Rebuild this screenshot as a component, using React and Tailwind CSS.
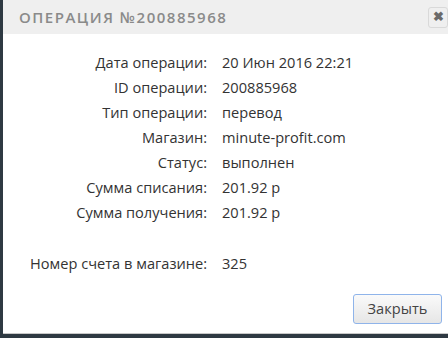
export default function App() {
  const rows = [
    ["Дата операции:", "20 Июн 2016 22:21"],
    ["ID операции:", "200885968"],
    ["Тип операции:", "перевод"],
    ["Магазин:", "minute-profit.com"],
    ["Статус:", "выполнен"],
    ["Сумма списания:", "201.92 р"],
    ["Сумма получения:", "201.92 р"],
  ];
  return (
    <div className="w-[448px] h-[338px] bg-[#2e3942] flex overflow-hidden" style={{ fontFamily: '"Open Sans", "Liberation Sans", sans-serif' }}>
      <div className="ml-[3px] mb-[4px] flex-1 bg-white flex flex-col border-b border-[#c8c8c8]">
        <div className="h-[34px] bg-[#efefef] flex items-center justify-between pl-[16px] shrink-0">
          <div className="text-[15px] font-semibold tracking-[1.5px] text-[#8a8a8a]">ОПЕРАЦИЯ №200885968</div>
          <div className="w-[20px] h-[21px] border border-[#d9d9d9] rounded-[3px] bg-[#efefef] flex items-center justify-center text-[#6a6a6a] text-[13px] font-bold">✖</div>
        </div>
        <div className="grid grid-cols-[204px_1fr] gap-x-[15px] text-[14.6px] text-[#333] pt-[16px]">
          {rows.map(([l, v]) => (
            <div key={l} className="contents">
              <div className="text-right h-[25px] leading-[25px]">{l}</div>
              <div className="h-[25px] leading-[25px]">{v}</div>
            </div>
          ))}
          <div className="h-[26px]"></div>
          <div className="h-[26px]"></div>
          <div className="text-right h-[25px] leading-[25px]">Номер счета в магазине:</div>
          <div className="h-[25px] leading-[25px]">325</div>
        </div>
        <div className="flex-1 flex items-end justify-end pr-[6px] pb-[9px]">
          <div className="w-[89px] h-[30px] rounded-[3px] border border-[#8fb4ea] bg-gradient-to-b from-[#fafafa] to-[#e6e6e6] flex items-center justify-center text-[14.6px] text-[#444]">Закрыть</div>
        </div>
      </div>
    </div>
  );
}
